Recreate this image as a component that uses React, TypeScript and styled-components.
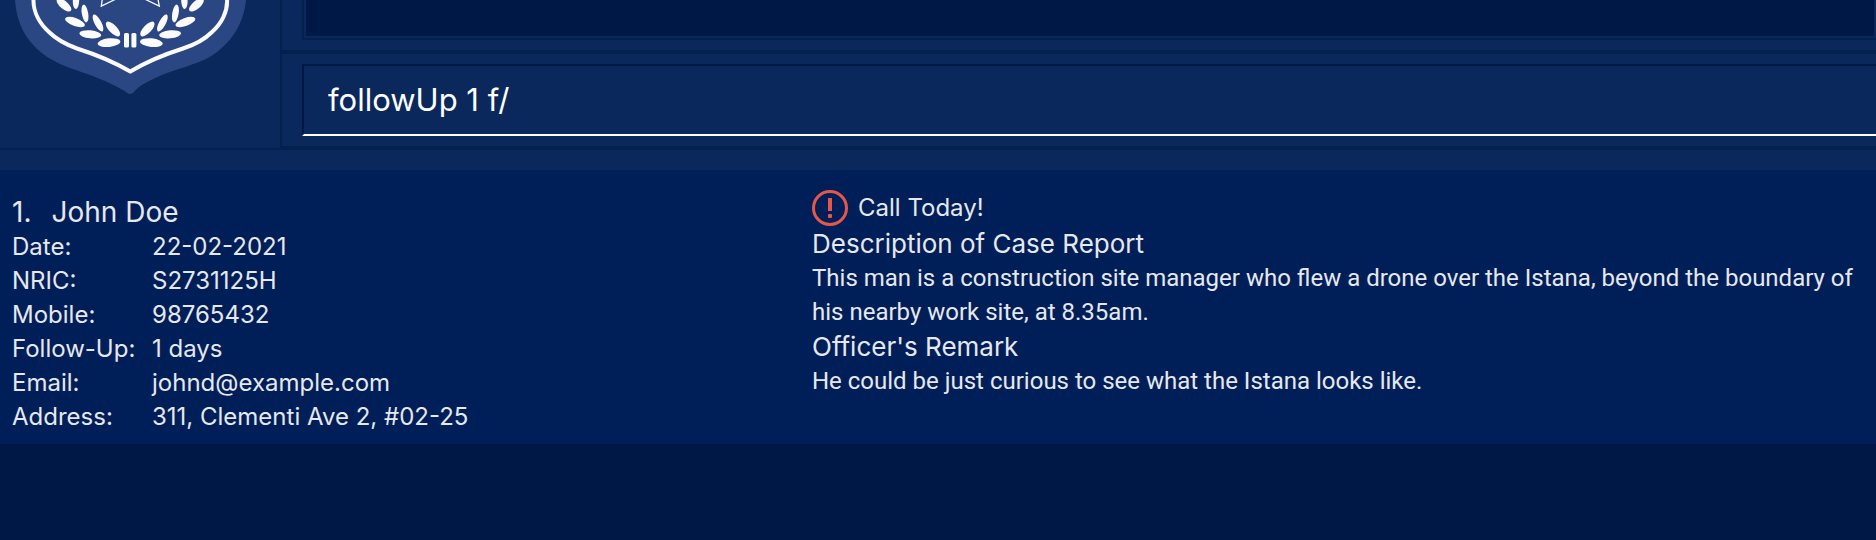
import React from 'react';
import styled, { createGlobalStyle } from 'styled-components';

const color = {
  page: '#001845',
  panel: '#0a285c',
  line: '#03204f',
  deepLine: '#001846',
  card: '#001e57',
  text: '#e6e8ee',
  shield: '#2a4784',
  alert: '#e4584a',
};

const GlobalStyle = createGlobalStyle`
  *, *::before, *::after { box-sizing: border-box; }
  body {
    margin: 0;
    background: ${color.page};
    color: ${color.text};
    font-family: Inter, "Liberation Sans", sans-serif;
    font-size: 24px;
    line-height: 34px;
  }
`;

const Page = styled.div`
  min-height: 100vh;
`;

const Header = styled.header`
  display: grid;
  grid-template-columns: 282px minmax(0, 1fr);
  background: ${color.panel};
  border-bottom: 2px solid ${color.line};
`;

const LogoPane = styled.div`
  border-right: 2px solid ${color.line};
`;

const Logo = styled.svg`
  display: block;
  width: 260px;
  height: 100px;
`;

const Console = styled.div`
  display: flex;
  flex-direction: column;
`;

const ResultPane = styled.div`
  padding-left: 20px;
  padding-bottom: 10px;
  border-bottom: 2px solid ${color.line};
`;

const ResultFrame = styled.div`
  border: solid ${color.line};
  border-width: 0 0 2px 2px;
`;

const ResultDisplay = styled.div`
  height: 38px;
  background: ${color.page};
  border: solid ${color.panel};
  border-width: 0 2px 2px 2px;
`;

const CommandPane = styled.form`
  padding: 10px 0 10px 20px;
  border: solid ${color.line};
  border-width: 2px 0;
`;

const CommandInput = styled.input`
  display: block;
  width: 100%;
  height: 72px;
  padding: 0 24px 2px;
  border: solid ${color.deepLine};
  border-width: 2px 0 2px 2px;
  border-bottom-color: #ffffff;
  border-radius: 0;
  outline: none;
  background: transparent;
  color: #ffffff;
  font: inherit;
  font-size: 31px;
`;

const Spacer = styled.div`
  height: 20px;
  background: ${color.panel};
`;

const CaseCard = styled.article`
  display: grid;
  grid-template-columns: minmax(0, 3fr) minmax(0, 4fr);
  background: ${color.card};
`;

const Person = styled.section`
  padding: 24px 12px 10px;
`;

const PersonName = styled.h2`
  display: flex;
  gap: 20px;
  margin: 0;
  font-size: 28px;
  font-weight: 400;
  line-height: 36px;
`;

const Details = styled.dl`
  display: grid;
  grid-template-columns: 140px minmax(0, 1fr);
  margin: 0;
`;

const Label = styled.dt``;

const Value = styled.dd`
  margin: 0;
`;

const Report = styled.section`
  padding: 20px 8px 10px;
`;

const Reminder = styled.div`
  display: flex;
  align-items: center;
  gap: 10px;
  height: 36px;
`;

const AlertIcon = styled.svg`
  width: 36px;
  height: 36px;
`;

const ReportHeading = styled.h3`
  margin: 0;
  font-size: 26px;
  font-weight: 400;
  line-height: 35px;
`;

const ReportText = styled.p`
  margin: 0;
  font-family: Roboto, "Liberation Sans", sans-serif;
`;

const details = [
  ['Date:', '22-02-2021'],
  ['NRIC:', 'S2731125H'],
  ['Mobile:', '98765432'],
  ['Follow-Up:', '1 days'],
  ['Email:', 'johnd@example.com'],
  ['Address:', '311, Clementi Ave 2, #02-25'],
];

// One half of the laurel: centre, radii and tilt of each leaf.
const leaves = [
  [64, 5, 9, 4, 40],
  [75, 22, 10.5, 4, 20],
  [90.3, 34.3, 11, 4, 5],
  [109, 42.6, 11.5, 4.3, -6],
  [76, 1, 8, 3.2, 92],
  [85, 13.5, 9, 3.2, 80],
  [98, 23, 9.5, 3.4, 62],
  [113, 29, 9.5, 4, 46],
];

const Laurel = () => (
  <>
    {leaves.map(([x, y, rx, ry, tilt]) => (
      <ellipse key={x} cx={x} cy={y} rx={rx} ry={ry} transform={`rotate(${tilt} ${x} ${y})`} />
    ))}
    <rect x="124" y="33" width="5" height="14.5" rx="1.5" />
  </>
);

const Badge = () => (
  <Logo viewBox="0 0 260 100" role="img" aria-label="Police shield">
    <path
      fill={color.shield}
      d="M15 0C16 14 20 28 29 40C36 49 45 57 60 64C73 70 87 73 100 79C112 84 122 89 126 92Q130 96 134 92C138 86 150 80 162 75C177 69 194 65 208 58C220 51 229 42 236 31C242 21 245 10 246 0Z"
    />
    <path
      fill="none"
      stroke="#fbfafd"
      strokeWidth="4"
      d="M33.500 -1C33 12 40 24 49 32C57 40 66 44.500 77 48.500C96 54.500 113 61.500 130.300 71.500C147 61.500 164 54.500 183 48.500C194 45 204 40 212 32C221 24 228 12 227 -1"
    />
    <path
      fill="none"
      stroke="#fbfafd"
      strokeWidth="1.3"
      d="M103 -6L101.300 6.200L130.300 -8L159.300 6.200L157 -6"
    />
    <g fill="#fbfafd">
      <Laurel />
      <g transform="translate(260.400 0) scale(-1 1)">
        <Laurel />
      </g>
    </g>
  </Logo>
);

export default function App() {
  return (
    <Page>
      <GlobalStyle />
      <Header>
        <LogoPane>
          <Badge />
        </LogoPane>
        <Console>
          <ResultPane>
            <ResultFrame>
              <ResultDisplay />
            </ResultFrame>
          </ResultPane>
          <CommandPane onSubmit={(event) => event.preventDefault()}>
            <CommandInput aria-label="Command" defaultValue="followUp 1 f/" spellCheck={false} />
          </CommandPane>
        </Console>
      </Header>
      <Spacer />
      <CaseCard>
        <Person>
          <PersonName>
            <span>1.</span>
            <span>John Doe</span>
          </PersonName>
          <Details>
            {details.map(([label, value]) => (
              <React.Fragment key={label}>
                <Label>{label}</Label>
                <Value>{value}</Value>
              </React.Fragment>
            ))}
          </Details>
        </Person>
        <Report>
          <Reminder>
            <AlertIcon viewBox="0 0 36 36" aria-hidden="true">
              <circle cx="18" cy="18" r="16.500" fill="none" stroke={color.alert} strokeWidth="3" />
              <rect x="16" y="8" width="4" height="13" fill={color.alert} />
              <rect x="16" y="24" width="4" height="4" rx="1" fill={color.alert} />
            </AlertIcon>
            <span>Call Today!</span>
          </Reminder>
          <ReportHeading>Description of Case Report</ReportHeading>
          <ReportText>
            This man is a construction site manager who flew a drone over the Istana, beyond the
            boundary of his nearby work site, at 8.35am.
          </ReportText>
          <ReportHeading>Officer's Remark</ReportHeading>
          <ReportText>He could be just curious to see what the Istana looks like.</ReportText>
        </Report>
      </CaseCard>
    </Page>
  );
}
